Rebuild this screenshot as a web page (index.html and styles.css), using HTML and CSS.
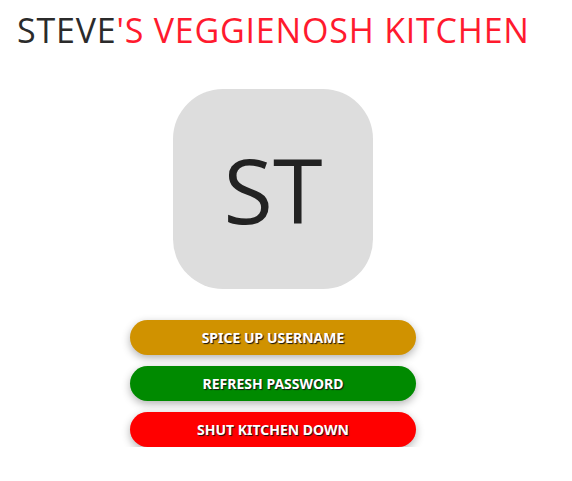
FILE: index.html
```html
<!DOCTYPE html>
<html>
<head>
<meta charset="utf-8">
<link rel="stylesheet" href="styles.css">
</head>
<body>
<h1 class="title"><span class="owner">STEVE</span><span class="rest">'S VEGGIENOSH KITCHEN</span></h1>
<div class="panel">
  <div class="avatar">ST</div>
  <div class="actions">
    <button class="btn btn-spice">SPICE UP USERNAME</button>
    <button class="btn btn-refresh">REFRESH PASSWORD</button>
    <button class="btn btn-shut">SHUT KITCHEN DOWN</button>
  </div>
</div>
</body>
</html>
```
FILE: styles.css
```css
body {
  margin: 0;
  background: #fff;
  font-family: "Open Sans", sans-serif;
}
.title {
  margin: 0;
  padding: 10px 0 0 17px;
  font-size: 34px;
  font-weight: 400;
  letter-spacing: 0.8px;
  line-height: 40px;
}
.owner { color: #2b2b2b; }
.rest { color: #ff1a2e; }
.panel {
  width: 286px;
  margin: 39px 0 0 130px;
  display: flex;
  flex-direction: column;
  align-items: center;
}
.avatar {
  width: 200px;
  height: 200px;
  border-radius: 50px;
  background: #dddddd;
  color: #222;
  font-size: 90px;
  display: flex;
  align-items: center;
  justify-content: center;
  line-height: 1;
}
.actions {
  margin-top: 31px;
  width: 100%;
  display: flex;
  flex-direction: column;
  gap: 11px;
}
.btn {
  height: 35px;
  border: none;
  border-radius: 18px;
  color: #fff;
  font-family: "Noto Sans", sans-serif;
  font-weight: 700;
  font-size: 14px;
  text-shadow: 1px 1px 1px #111;
  box-shadow: 0 3px 8px rgba(0,0,0,0.3);
  cursor: pointer;
}
.btn-spice { background: #d09200; }
.btn-refresh { background: #008a00; }
.btn-shut { background: #ff0000; }
```
